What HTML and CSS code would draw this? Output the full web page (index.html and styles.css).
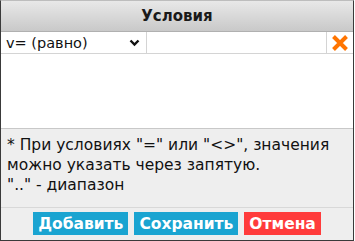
FILE: index.html
```html
<!DOCTYPE html>
<html>
<head>
<meta charset="utf-8">
<link rel="stylesheet" href="styles.css">
</head>
<body>
<div class="dialog">
  <div class="header">Условия</div>
  <div class="body">
    <div class="row">
      <div class="select"><span>v= (равно)</span>
        <svg class="chev" width="11" height="8" viewBox="0 0 11 8"><path d="M1.5 1.5 L5.5 5.5 L9.5 1.5" fill="none" stroke="#111" stroke-width="2.4"/></svg>
      </div>
      <div class="input"></div>
      <div class="del">
        <svg width="18" height="18" viewBox="0 0 18 18"><path d="M2.5 2.5 L15.5 15.5 M15.5 2.5 L2.5 15.5" stroke="#ff7400" stroke-width="4"/></svg>
      </div>
    </div>
  </div>
  <div class="note">* При условиях "=" или "&lt;&gt;", значения можно указать через запятую.<br>".." - диапазон</div>
  <div class="actions">
    <button class="btn blue">Добавить</button>
    <button class="btn blue">Сохранить</button>
    <button class="btn red">Отмена</button>
  </div>
</div>
</body>
</html>
```
FILE: styles.css
```css
html, body { margin: 0; padding: 0; background: #fff; }
.dialog {
  width: 352px;
  height: 239px;
  border: 1px solid #3a3a3a;
  border-top-color: #bdbdbd;
  background: #eeeeee;
  display: flex;
  flex-direction: column;
  font-family: "DejaVu Sans", sans-serif;
}
.header {
  height: 30px;
  line-height: 30px;
  text-align: center;
  font-weight: bold;
  font-size: 15px;
  color: #1a1a1a;
  background: linear-gradient(#e8e8e8, #c9c9c9);
  border-bottom: 1px solid #b0b0b0;
}
.body {
  height: 96px;
  background: #fff;
  border-bottom: 1px solid #c8c8c8;
}
.row {
  display: flex;
  height: 21px;
  border-bottom: 1px solid #d4d4d4;
  padding-left: 1px;
}
.select {
  width: 145px;
  display: flex;
  align-items: center;
  justify-content: space-between;
  padding: 0 6px 0 4px;
  box-sizing: border-box;
  font-size: 14.5px;
  color: #111;
  border-right: 1px solid #d4d4d4;
}
.input {
  flex: 1;
  border-right: 1px solid #d4d4d4;
}
.del {
  width: 26px;
  display: flex;
  align-items: center;
  justify-content: center;
}
.note {
  padding: 6px 6px 0 6px;
  font-size: 15.5px;
  line-height: 20px;
  color: #111;
  height: 72px;
  border-bottom: 1px solid #d8d8d8;
}
.actions {
  display: flex;
  justify-content: center;
  gap: 6px;
  padding-top: 4px;
}
.btn {
  border: none;
  color: #fff;
  font-family: "DejaVu Sans", sans-serif;
  font-weight: bold;
  font-size: 15.5px;
  height: 23px;
  padding: 0 5px;
}
.blue { background: #1aa4d1; }
.red { background: #ff3b3b; }
```
